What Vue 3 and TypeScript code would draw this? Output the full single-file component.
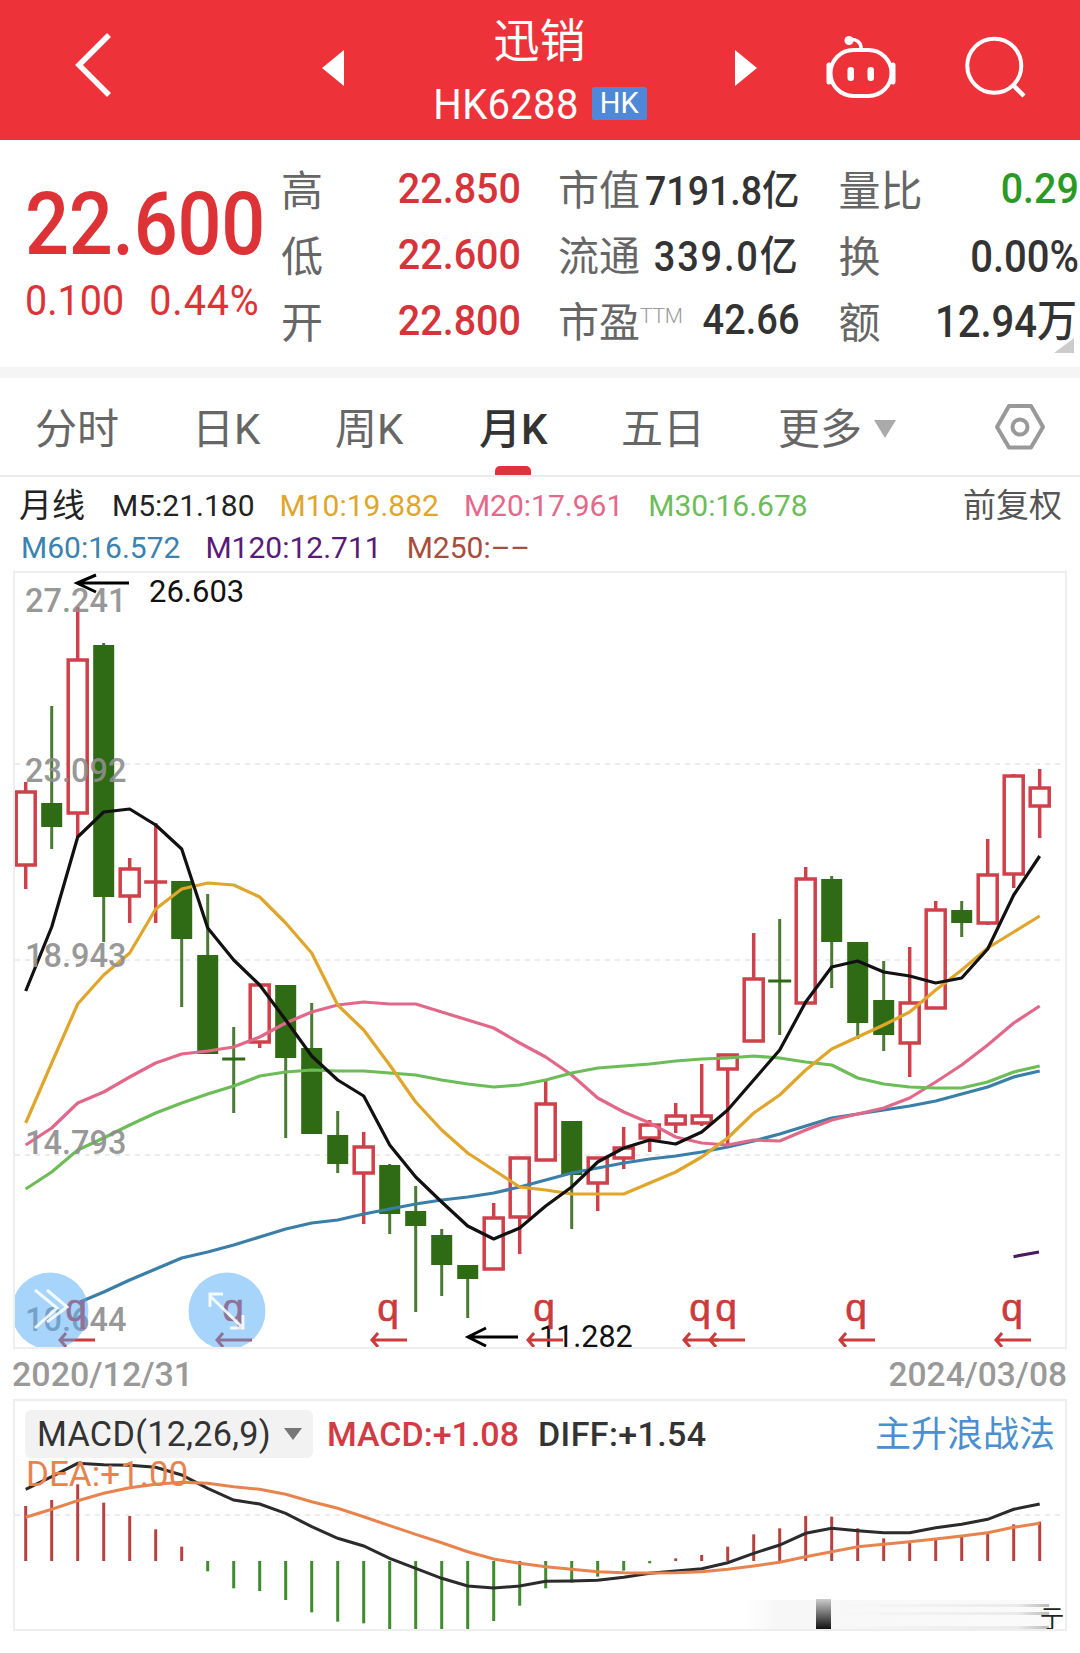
<script setup lang="ts">
type Candle = [string, number, number, number, number]

const xAt = (i: number): number => 25.7 + 26 * i

const candles: Candle[] = [
  ['r', 792, 865, 782, 889], ['g', 803, 827, 706, 849], ['r', 660, 813, 607, 837], ['g', 645, 897, 643, 942],
  ['r', 869, 896, 858, 923], ['r', 882, 882, 823, 923], ['g', 881, 939, 881, 1007], ['g', 955, 1054, 894, 1054],
  ['g', 1059, 1059, 1027, 1113], ['r', 985, 1042, 985, 1048], ['g', 985, 1058, 985, 1138], ['g', 1048, 1134, 1003, 1134],
  ['g', 1135, 1164, 1111, 1173], ['r', 1147, 1173, 1132, 1224], ['g', 1165, 1214, 1164, 1234], ['g', 1211, 1226, 1186, 1312],
  ['g', 1235, 1265, 1229, 1296], ['g', 1265, 1279, 1265, 1318], ['r', 1218, 1269, 1203, 1269], ['r', 1158, 1217, 1158, 1254],
  ['r', 1104, 1160, 1081, 1160], ['g', 1121, 1175, 1121, 1229], ['r', 1158, 1183, 1158, 1211], ['r', 1148, 1158, 1127, 1169],
  ['r', 1125, 1138, 1120, 1152], ['r', 1116, 1124, 1103, 1133], ['r', 1116, 1123, 1064, 1126], ['r', 1055, 1069, 1055, 1148],
  ['r', 979, 1041, 933, 1041], ['g', 981, 981, 919, 1035], ['r', 879, 1003, 867, 1003], ['g', 879, 942, 876, 988],
  ['g', 942, 1023, 942, 1039], ['g', 1000, 1035, 961, 1051], ['r', 1003, 1043, 947, 1077], ['r', 910, 1008, 901, 1008],
  ['g', 910, 923, 901, 937], ['r', 875, 923, 839, 925], ['r', 776, 874, 774, 888], ['r', 788, 806, 769, 838]
]

const m5 = [991, 927, 837, 812, 809, 825, 849, 928, 960, 985, 1020, 1056, 1080, 1096, 1145, 1177, 1202, 1226, 1239, 1228, 1206, 1187, 1162, 1148, 1140, 1144, 1132, 1110, 1080, 1050, 1002, 967, 961, 972, 976, 983, 978, 949, 895, 856]
const m10 = [1123, 1063, 1004, 975, 953, 909, 889, 883, 885, 897, 923, 953, 1005, 1030, 1065, 1102, 1130, 1153, 1170, 1187, 1190, 1194, 1194, 1194, 1183, 1172, 1157, 1138, 1113, 1095, 1070, 1049, 1037, 1025, 1012, 990, 970, 948, 932, 916]
const m20 = [1145, 1128, 1103, 1092, 1077, 1063, 1054, 1051, 1047, 1037, 1023, 1012, 1005, 1002, 1004, 1004, 1012, 1020, 1028, 1043, 1057, 1075, 1098, 1112, 1123, 1137, 1143, 1145, 1140, 1141, 1130, 1120, 1114, 1108, 1098, 1082, 1065, 1045, 1023, 1006]
const m30 = [1189, 1172, 1150, 1138, 1125, 1113, 1103, 1094, 1086, 1076, 1072, 1070, 1071, 1071, 1073, 1075, 1080, 1084, 1087, 1085, 1080, 1073, 1068, 1066, 1064, 1061, 1059, 1058, 1056, 1058, 1062, 1065, 1078, 1084, 1087, 1088, 1088, 1082, 1072, 1066]
const m60 = [1303, 1292, 1280, 1269, 1258, 1252, 1245, 1237, 1229, 1223, 1220, 1214, 1209, 1204, 1200, 1197, 1193, 1187, 1180, 1173, 1168, 1163, 1159, 1156, 1152, 1147, 1141, 1134, 1126, 1118, 1114, 1110, 1106, 1101, 1094, 1087, 1077, 1071]

const line = (ys: number[], from = 0): string =>
  ys.map((y, i) => `${xAt(i + from).toFixed(1)},${y}`).join(' ')

const maLines = [
  { cls: 'l-blue', pts: line(m60, 2) },
  { cls: 'l-pink', pts: line(m20) },
  { cls: 'l-green', pts: line(m30) },
  { cls: 'l-yellow', pts: line(m10) },
  { cls: 'l-black', pts: line(m5) }
]

const axis = [
  { t: '27.241', y: 612 },
  { t: '23.092', y: 782 },
  { t: '18.943', y: 967 },
  { t: '14.793', y: 1154 },
  { t: '10.644', y: 1331 }
]

const markers = [76, 233, 388, 544, 700, 726, 856, 1012]
const grid = [764, 960, 1155]

const hist = [348, 330, 283, 338, 378, 418, 470, 544, 595, 603, 630, 667, 695, 700, 717, 725, 725, 725, 693, 647, 595, 578, 560, 542, 520, 505, 495, 470, 433, 415, 378, 380, 415, 445, 455, 445, 440, 428, 403, 395]
const dif = [298, 260, 220, 224, 226, 232, 255, 295, 330, 342, 370, 410, 445, 468, 505, 535, 565, 588, 594, 588, 574, 573, 571, 562, 550, 543, 536, 518, 490, 465, 430, 415, 422, 428, 428, 413, 403, 388, 358, 342]
const dea = [382, 358, 332, 310, 293, 283, 277, 280, 290, 298, 313, 335, 355, 380, 407, 433, 458, 485, 507, 520, 530, 538, 545, 548, 549, 548, 545, 538, 528, 517, 500, 485, 470, 463, 455, 447, 438, 428, 412, 400]
const my = (z: number): number => 1390 + z / 3
const zero = my(513)
const difPts = dif.map((z, i) => `${xAt(i).toFixed(1)},${my(z).toFixed(1)}`).join(' ')
const deaPts = dea.map((z, i) => `${xAt(i).toFixed(1)},${my(z).toFixed(1)}`).join(' ')

const rowsMid = [
  { h: '高', v: '22.850' },
  { h: '低', v: '22.600' },
  { h: '开', v: '22.800' }
]
</script>

<template>
  <div class="page">
    <header class="topbar">
      <svg class="back" width="40" height="68" viewBox="0 0 40 68">
        <path d="M34 3 L4 33 L34 63" fill="none" stroke="#fff" stroke-width="5.500" />
      </svg>
      <span class="tri-left"></span>
      <div class="title">
        <div class="name">迅销</div>
        <div class="code"><span class="code-num">HK6288</span><em>HK</em></div>
      </div>
      <span class="tri-right"></span>
      <svg class="robot" width="70" height="64" viewBox="826 35 70 64">
        <path d="M849 39 C855 37 862 41 861 49" fill="none" stroke="#fff" stroke-width="3.5" />
        <circle cx="849" cy="39.500" r="4.500" fill="#fff" />
        <rect x="830.500" y="49" width="61" height="46" rx="23" fill="none" stroke="#fff" stroke-width="4" />
        <path d="M829 64 V81 M893 64 V81" stroke="#fff" stroke-width="5" stroke-linecap="round" />
        <rect x="847.500" y="66" width="6.500" height="14" rx="3.200" fill="#fff" />
        <rect x="867.500" y="66" width="6.500" height="14" rx="3.200" fill="#fff" />
      </svg>
      <svg class="search" width="62" height="62" viewBox="965 36 62 62">
        <circle cx="994.300" cy="65.700" r="27" fill="none" stroke="#fff" stroke-width="4" />
        <path d="M1014 86 L1024 96" stroke="#fff" stroke-width="4.500" />
      </svg>
    </header>

    <section class="quote">
      <div class="price">
        <div class="now">22.600</div>
        <div class="delta"><span>0.100</span><span class="pct">0.44%</span></div>
      </div>
      <div class="cells">
        <div v-for="r in rowsMid" :key="r.h" class="cell">
          <span class="lbl big">{{ r.h }}</span><span class="red-v">{{ r.v }}</span>
        </div>
      </div>
      <div class="cells mid">
        <div class="cell"><span class="lbl">市值</span><span class="dark-v up-2 narrow">7191.8亿</span></div>
        <div class="cell"><span class="lbl">流通</span><span class="dark-v up-2 spaced">339.0亿</span></div>
        <div class="cell"><span class="lbl">市盈<sup>TTM</sup></span><span class="dark-v">42.66</span></div>
      </div>
      <div class="cells last">
        <div class="cell"><span class="lbl big">量比</span><span class="green-v">0.29</span></div>
        <div class="cell"><span class="lbl big">换</span><span class="dark-v wide down-2">0.00%</span></div>
        <div class="cell"><span class="lbl big">额</span><span class="dark-v wide up-2 amount">12.94万</span></div>
      </div>
      <i class="corner"></i>
    </section>

    <div class="band"></div>

    <nav class="tabs">
      <span>分时</span>
      <span>日K</span>
      <span>周K</span>
      <span><b class="active">月K</b></span>
      <span>五日</span>
      <span class="more">更多<i></i></span>
      <svg class="hex" width="50" height="46" viewBox="995 404 50 46">
        <path d="M997 427 L1009 406 H1031 L1043 427 L1031 447.500 H1009 Z" fill="none" stroke="#999" stroke-width="4" stroke-linejoin="round" />
        <circle cx="1020" cy="427" r="7.500" fill="none" stroke="#999" stroke-width="4" />
      </svg>
    </nav>

    <div class="legend">
      <div class="legend-row">
        <span class="c-dark cjk first">月线</span>
        <span class="c-dark">M5:21.180</span>
        <span class="c-yellow">M10:19.882</span>
        <span class="c-pink">M20:17.961</span>
        <span class="c-green">M30:16.678</span>
        <span class="adj cjk">前复权</span>
      </div>
      <div class="legend-row second">
        <span class="c-blue">M60:16.572</span>
        <span class="c-purple">M120:12.711</span>
        <span class="c-brown">M250:––</span>
      </div>
    </div>

    <div class="chart-frame">
      <svg class="k" width="1050" height="774" viewBox="15 573 1050 774">
        <line v-for="y in grid" :key="y" x1="15" x2="1065" :y1="y" :y2="y" class="dash" />
        <g v-for="(c, i) in candles" :key="i" :class="c[0] === 'r' ? 'up' : 'down'">
          <line class="wick" :x1="xAt(i)" :x2="xAt(i)" :y1="c[3]" :y2="c[1]" />
          <line class="wick" :x1="xAt(i)" :x2="xAt(i)" :y1="c[2]" :y2="c[4]" />
          <line v-if="c[1] === c[2]" class="doji" :x1="xAt(i) - 11.500" :x2="xAt(i) + 11.500" :y1="c[1]" :y2="c[2]" />
          <rect v-else-if="c[0] === 'r'" class="hollow" :x="xAt(i) - 9.500" :y="c[1]" width="19" :height="c[2] - c[1]" />
          <rect v-else class="solid" :x="xAt(i) - 10.500" :y="c[1]" width="21" :height="c[2] - c[1]" />
        </g>
        <polyline v-for="l in maLines" :key="l.cls" :points="l.pts" :class="['ma', l.cls]" />
        <line x1="1013.500" y1="1256.700" x2="1039" y2="1252" class="ma l-purple" />

        <text v-for="a in axis" :key="a.t" x="25" :y="a.y" class="axis">{{ a.t }}</text>

        <path d="M129 583 H77 M96 575 L77 583 L96 592" class="black-arrow" />
        <text x="149" y="602" class="note">26.603</text>
        <path d="M518 1337 H468 M486 1328 L468 1337 L486 1346" class="black-arrow" />
        <text x="539" y="1347" class="note small">11.282</text>

        <g v-for="m in markers" :key="m">
          <text :x="m" y="1321" class="q">q</text>
          <path :d="`M${m + 19} 1340 H${m - 16} M${m - 10} 1333 L${m - 16} 1340 L${m - 10} 1347`" class="red-arrow" />
        </g>

        <circle cx="50" cy="1311" r="38.500" class="bubble" />
        <circle cx="227" cy="1311" r="38.500" class="bubble" />
        <path d="M35 1290 L57 1308 L35 1328 M47 1290 L67 1307 L47 1322" class="bubble-ico" />
        <path d="M210 1296 L243 1328 M210 1307 V1294 H223 M230 1328 H243 V1315" class="bubble-ico" />
      </svg>
    </div>

    <div class="dates"><span>2020/12/31</span><span class="date-end">2024/03/08</span></div>

    <div class="macd">
      <svg class="m" width="1050" height="228" viewBox="15 1401 1050 228">
        <defs>
          <linearGradient id="fadeX" x1="0" x2="1" y1="0" y2="0">
            <stop offset="0" stop-color="#000" stop-opacity="0" />
            <stop offset="0.850" stop-color="#000" stop-opacity="0.060" />
            <stop offset="1" stop-color="#000" stop-opacity="0.250" />
          </linearGradient>
          <linearGradient id="fadeY" x1="0" x2="0" y1="0" y2="1">
            <stop offset="0" stop-color="#ccc" />
            <stop offset="1" stop-color="#111" />
          </linearGradient>
          <linearGradient id="fadeIn" x1="0" x2="1" y1="0" y2="0">
            <stop offset="0" stop-color="#f7f7f7" stop-opacity="0" />
            <stop offset="0.100" stop-color="#f7f7f7" />
            <stop offset="1" stop-color="#fafafa" />
          </linearGradient>
        </defs>
        <line x1="15" x2="1065" y1="1515" y2="1515" class="dash" />
        <line v-for="(z, i) in hist" :key="i" :x1="xAt(i)" :x2="xAt(i)" :y1="zero" :y2="my(z)" :class="z < 513 ? 'bar-up' : 'bar-down'" />
        <polyline :points="difPts" class="dif" />
        <polyline :points="deaPts" class="dea" />
        <rect x="745" y="1600" width="305" height="29" fill="url(#fadeIn)" />
        <rect x="835" y="1604" width="214" height="3" fill="url(#fadeX)" />
        <rect x="835" y="1612" width="214" height="3" fill="url(#fadeX)" />
        <rect x="835" y="1626" width="214" height="3" fill="url(#fadeX)" />
        <rect x="816" y="1599" width="15" height="30" fill="url(#fadeY)" />
        <text x="1040" y="1627" class="tail">亍</text>
      </svg>
      <div class="macd-head">
        <div class="macd-row">
          <span class="tag"><span class="tag-t">MACD(12,26,9)</span><i></i></span>
          <span class="macd-v">MACD:+1.08</span>
          <span class="diff-v">DIFF:+1.54</span>
          <span class="link">主升浪战法</span>
        </div>
        <div class="dea-v">DEA:+1.00</div>
      </div>
    </div>
  </div>
</template>

<style scoped>
.page {
  width: 1080px;
  height: 1653px;
  overflow: hidden;
  background: #fff;
  font-family: Roboto, "Noto Sans CJK SC", sans-serif;
  color: #333;
}

.topbar {
  height: 140px;
  background: #ee323a;
  display: flex;
  align-items: flex-start;
  padding-left: 75px;
  color: #fff;
}
.back { margin-top: 32px; flex: none; }
.tri-left, .tri-right {
  width: 0;
  height: 0;
  flex: none;
  margin-top: 50px;
  border-top: 18px solid transparent;
  border-bottom: 18px solid transparent;
}
.tri-left { border-right: 22px solid #fff; margin-left: 207px; }
.tri-right { border-left: 22px solid #fff; }
.title { width: 391px; flex: none; text-align: center; padding-top: 16px; }
.name { font-size: 46px; line-height: 50px; }
.code {
  margin-top: 21px;
  display: flex;
  justify-content: center;
  align-items: center;
  gap: 13px;
  font-size: 40px;
  height: 33px;
  padding-left: 1px;
}
.code-num { display: inline-block; letter-spacing: 0.3px; transform: scaleY(1.08) translateY(1px); }
.code em {
  font-style: normal;
  font-size: 29px;
  width: 55px;
  height: 33px;
  line-height: 33px;
  background: #4f88d8;
  border-radius: 2px;
}
.robot { margin: 36px 0 0 69px; flex: none; }
.search { margin: 36px 0 0 69px; flex: none; }

.quote {
  position: relative;
  height: 227px;
  display: flex;
  padding-left: 25px;
  box-sizing: border-box;
}
.price { width: 256px; flex: none; color: #dd3236; padding-top: 40px; }
.now { font-size: 77.500px; line-height: 90px; font-weight: 500; letter-spacing: -0.3px; transform: scaleY(1.12); transform-origin: 0 50%; }
.delta {
  margin-top: 8px;
  font-size: 39.500px;
  line-height: 46px;
  display: flex;
  gap: 25px;
  transform: scaleY(1.1);
  transform-origin: 0 50%;
}
.pct { letter-spacing: 0.900px; }
.cells {
  width: 240px;
  flex: none;
  display: grid;
  grid-auto-rows: 66px;
  padding-top: 14px;
}
.cells.mid { margin-left: 37px; width: 241.500px; }
.cells.last { margin-left: 39px; width: 240.500px; }
.cell {
  display: flex;
  justify-content: space-between;
  align-items: center;
  white-space: nowrap;
}
.lbl { font-size: 41px; color: #666; }
.lbl.big { font-size: 42px; }
.lbl sup {
  font-size: 21px;
  color: #999;
  font-weight: 300;
  vertical-align: 14px;
  line-height: 0;
  letter-spacing: -0.2px;
}
.red-v, .green-v, .dark-v {
  display: inline-block;
  font-weight: 500;
  transform: scaleY(1.1) translateY(1px);
}
.red-v { font-size: 39.500px; color: #d6333a; }
.dark-v { font-size: 38px; color: #333; }
.dark-v.narrow { font-size: 37.500px; }
.dark-v.spaced { letter-spacing: 1.800px; }
.dark-v.wide { font-size: 40px; }
.dark-v.up-2 { transform: scaleY(1.1) translateY(-1px); }
.dark-v.down-2 { transform: scaleY(1.1) translateY(3px); }
.green-v { font-size: 39.500px; color: #2a9a25; }
.amount { margin-right: 2px; }
.corner {
  position: absolute;
  right: 6px;
  bottom: 14px;
  width: 20px;
  height: 15px;
  background: #ccc;
  clip-path: polygon(100% 0, 100% 100%, 0 100%);
}

.band { height: 11px; background: #f5f5f5; }

.tabs {
  height: 91px;
  padding: 6px 0 0 35px;
  border-bottom: 2px solid #ebebeb;
  display: grid;
  grid-template-columns: 157px 143px 144px 142px 157px 218px 50px;
  align-items: center;
  font-size: 42px;
  line-height: 50px;
  color: #666;
  margin-bottom: -1px;
}
.tabs span { white-space: nowrap; }
.active {
  position: relative;
  display: inline-block;
  font-weight: 500;
  color: #333;
}
.active::after {
  content: "";
  position: absolute;
  left: 50%;
  margin-left: -18px;
  bottom: -20.500px;
  width: 36px;
  height: 9px;
  border-radius: 5px 5px 0 0;
  background: #e0323a;
}
.more { display: flex; align-items: center; gap: 12px; }
.more i {
  width: 0;
  height: 0;
  border-left: 11px solid transparent;
  border-right: 11px solid transparent;
  border-top: 18px solid #aaa;
  margin-top: -2px;
}
.hex { margin: -6px 0 0 -1px; }

.legend { padding: 8px 0 0 19px; height: 87px; }
.legend-row {
  display: flex;
  gap: 25px;
  height: 42px;
  align-items: center;
  font-size: 30px;
  white-space: nowrap;
}
.legend-row.second { padding-left: 2px; }
.cjk { font-size: 33px; margin-top: -4px; }
.first { margin-right: 2px; }
.adj { margin-left: auto; margin-right: 18px; color: #555; }
.c-dark { color: #222; }
.c-yellow { color: #e0a52b; }
.c-pink { color: #e5688a; }
.c-green { color: #6cbd5a; }
.c-blue { color: #3a82b0; }
.c-purple { color: #5a1a78; }
.c-brown { color: #a84c3c; }

.chart-frame {
  margin: 0 13px;
  height: 774px;
  border: 2px solid #eee;
}
.k, .m { display: block; }

.dash { stroke: #e6e6e6; stroke-width: 1.500; stroke-dasharray: 5 5; }
.up .wick, .up .doji { stroke: #d0404a; stroke-width: 3.500; }
.down .wick { stroke: #4a7a33; stroke-width: 3; }
.down .doji { stroke: #2f6b14; stroke-width: 3; }
.hollow { fill: #fff; stroke: #d0404a; stroke-width: 3.500; }
.solid { fill: #2f6b14; }
.ma { fill: none; stroke-width: 3.200; stroke-linejoin: round; }
.l-black { stroke: #111; }
.l-yellow { stroke: #e0a52b; }
.l-pink { stroke: #e2688a; }
.l-green { stroke: #6cbc58; }
.l-blue { stroke: #3a7fa8; }
.l-purple { stroke: #4a1a5e; }

.axis { font-size: 32.500px; font-weight: 500; fill: #8e8e8e; fill-opacity: 0.92; }
.note { font-size: 31px; fill: #111; }
.note.small { font-size: 30.500px; }
.black-arrow { fill: none; stroke: #000; stroke-width: 3; }
.red-arrow { fill: none; stroke: #cc3b3b; stroke-width: 3; }
.q {
  font-family: "Liberation Sans", sans-serif;
  font-size: 39px;
  fill: #cc3b3b;
  stroke: #cc3b3b;
  stroke-width: 0.600;
  text-anchor: middle;
}
.bubble { fill: rgba(80, 170, 245, 0.5); }
.bubble-ico { fill: none; stroke: rgba(255, 255, 255, 0.85); stroke-width: 3; }

.dates {
  height: 50px;
  padding: 0 13px 0 12px;
  display: flex;
  justify-content: space-between;
  align-items: center;
  font-size: 34px;
  font-weight: 500;
  color: #999;
}
.date-end { font-size: 33.500px; }

.macd {
  margin: 0 13px;
  height: 228px;
  border: 2px solid #eee;
  display: grid;
  overflow: hidden;
}
.m, .macd-head { grid-area: 1 / 1; }
.macd-head { padding: 9px 0 0 10px; font-size: 34px; }
.macd-row { display: flex; align-items: center; height: 48px; white-space: nowrap; }
.tag {
  width: 288px;
  height: 48px;
  box-sizing: border-box;
  padding-left: 12px;
  background: #f2f2f2;
  border-radius: 6px;
  display: flex;
  align-items: center;
  color: #333;
}
.tag-t { font-size: 34.200px; letter-spacing: 0.3px; }
.tag i {
  width: 0;
  height: 0;
  margin: 0 0 0 13px;
  border-left: 9px solid transparent;
  border-right: 9px solid transparent;
  border-top: 12px solid #777;
}
.macd-v { margin-left: 14px; color: #d23a44; font-weight: 500; }
.diff-v { margin-left: 19px; color: #333; font-weight: 500; letter-spacing: 0.400px; }
.link { margin-left: auto; margin-right: 10px; margin-top: -6px; font-size: 36px; color: #4a8fd0; }
.dea-v { height: 34px; line-height: 34px; margin-left: 1px; font-size: 35px; color: #e8834e; }

.bar-up { stroke: #b8403f; stroke-width: 3; }
.bar-down { stroke: #3f8c2f; stroke-width: 3; }
.dif { fill: none; stroke: #2b2b2b; stroke-width: 3; }
.dea { fill: none; stroke: #e8834e; stroke-width: 3; }
.tail { font-size: 24px; fill: #222; }
</style>

<style>
html, body { margin: 0; background: #fff; }
</style>
